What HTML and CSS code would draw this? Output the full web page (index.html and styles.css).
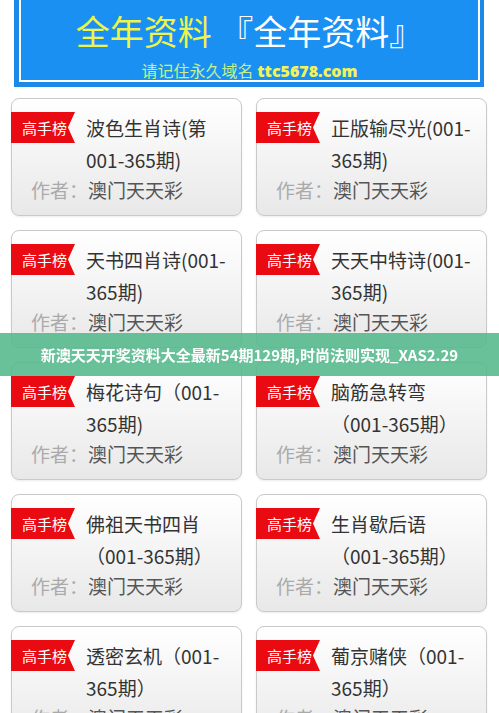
FILE: index.html
```html
<!DOCTYPE html>
<html lang="zh-CN">
<head>
<meta charset="utf-8">
<title>全年资料</title>
<link rel="stylesheet" href="styles.css">
</head>
<body>
<div class="header">
  <div class="header-inner">
    <div class="title"><span class="yellow">全年资料</span> <span class="white">『全年资料』</span></div>
    <div class="sub"><span class="sub-cn">请记住永久域名</span> <b class="sub-url">ttc5678.com</b></div>
  </div>
</div>

<div class="grid">
  <div class="card">
    <div class="head"><span class="ribbon">高手榜</span><div class="name">波色生肖诗(第<br>001-365期)</div></div>
    <div class="author"><span class="label">作者：</span>澳门天天彩</div>
  </div>
  <div class="card">
    <div class="head"><span class="ribbon">高手榜</span><div class="name">正版输尽光(001-<br>365期)</div></div>
    <div class="author"><span class="label">作者：</span>澳门天天彩</div>
  </div>
  <div class="card">
    <div class="head"><span class="ribbon">高手榜</span><div class="name">天书四肖诗(001-<br>365期)</div></div>
    <div class="author"><span class="label">作者：</span>澳门天天彩</div>
  </div>
  <div class="card">
    <div class="head"><span class="ribbon">高手榜</span><div class="name">天天中特诗(001-<br>365期)</div></div>
    <div class="author"><span class="label">作者：</span>澳门天天彩</div>
  </div>
  <div class="card">
    <div class="head"><span class="ribbon">高手榜</span><div class="name">梅花诗句（001-<br>365期)</div></div>
    <div class="author"><span class="label">作者：</span>澳门天天彩</div>
  </div>
  <div class="card">
    <div class="head"><span class="ribbon">高手榜</span><div class="name">脑筋急转弯<br>（001-365期）</div></div>
    <div class="author"><span class="label">作者：</span>澳门天天彩</div>
  </div>
  <div class="card">
    <div class="head"><span class="ribbon">高手榜</span><div class="name">佛祖天书四肖<br>（001-365期）</div></div>
    <div class="author"><span class="label">作者：</span>澳门天天彩</div>
  </div>
  <div class="card">
    <div class="head"><span class="ribbon">高手榜</span><div class="name">生肖歇后语<br>（001-365期）</div></div>
    <div class="author"><span class="label">作者：</span>澳门天天彩</div>
  </div>
  <div class="card">
    <div class="head"><span class="ribbon">高手榜</span><div class="name">透密玄机（001-<br>365期）</div></div>
    <div class="author"><span class="label">作者：</span>澳门天天彩</div>
  </div>
  <div class="card">
    <div class="head"><span class="ribbon">高手榜</span><div class="name">葡京赌侠（001-<br>365期）</div></div>
    <div class="author"><span class="label">作者：</span>澳门天天彩</div>
  </div>
</div>

<div class="banner">新澳天天开奖资料大全最新54期129期,时尚法则实现_XAS2.29</div>
</body>
</html>
```

FILE: styles.css
```css
html, body {
  margin: 0;
  padding: 0;
  background: #fff;
}
body {
  font-family: "Noto Sans CJK SC", "Noto Sans", sans-serif;
  color: #333;
}
.header {
  margin: 0 15px 0 14px;
  background: #1c88e8;
  padding: 0 4px 5px 5px;
}
.header-inner {
  border: 2px solid #fff;
  border-top: none;
  background: #1990f2;
  height: 80px;
  text-align: center;
}
.title {
  padding-top: 11px;
  height: 40px;
  line-height: 40px;
  font-size: 34px;
  white-space: nowrap;
}
.yellow { color: #eef44a; }
.white { color: #fff; }
.sub {
  margin-top: 9px;
  line-height: 20px;
  font-size: 16px;
  white-space: nowrap;
}
.sub-cn { color: #c6f08e; }
.sub-url {
  color: #f2f25a;
  font-family: "Open Sans", "Noto Sans", sans-serif;
  font-weight: 800;
  font-size: 16px;
}
.grid {
  display: grid;
  grid-template-columns: 1fr 1fr;
  column-gap: 14px;
  row-gap: 14px;
  padding: 11px 12px 20px 11px;
}
.card {
  box-sizing: border-box;
  height: 118px;
  border: 1px solid #c9c9c9;
  border-radius: 8px;
  background: linear-gradient(#ffffff, #e8e8e8);
  box-shadow: 0 1px 2px rgba(0,0,0,0.08);
  padding-top: 13px;
}
.head {
  display: flex;
  align-items: flex-start;
}
.ribbon {
  flex: none;
  margin-left: -1px;
  width: 64px;
  height: 31px;
  box-sizing: border-box;
  padding-left: 11px;
  background: #ea0a12;
  color: #fff;
  font-size: 15px;
  line-height: 31px;
  white-space: nowrap;
  clip-path: polygon(0 0, 100% 0, 89% 50%, 100% 100%, 0 100%);
}
.name {
  margin-left: 11px;
  font-size: 19px;
  line-height: 32px;
  color: #333;
  white-space: nowrap;
}
.author {
  padding-left: 19px;
  font-size: 19px;
  line-height: 28px;
  color: #555;
  white-space: nowrap;
}
.label { color: #aaa; }
.banner {
  position: fixed;
  left: 0;
  right: 0;
  top: 333px;
  height: 43px;
  line-height: 43px;
  background: rgba(84, 184, 140, 0.88);
  color: #fff;
  font-weight: 700;
  font-size: 15px;
  text-align: center;
  white-space: nowrap;
}
```
